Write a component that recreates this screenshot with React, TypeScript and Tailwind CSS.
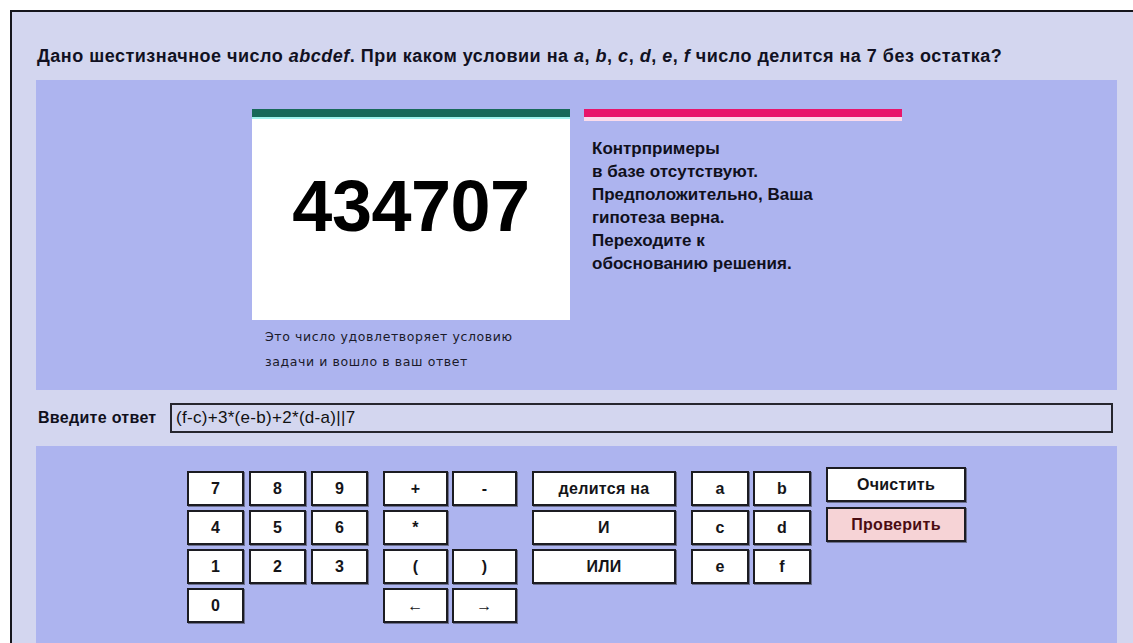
import type { ReactNode } from 'react';

// Тренажёр: проверка гипотезы о делимости шестизначного числа на 7.

const font = { fontFamily: '"Liberation Sans", Arial, sans-serif' };

const Key = ({ children, w = 'w-[57px]', pink = false }: { children: ReactNode; w?: string; pink?: boolean }) => (
  <button
    className={`${w} h-[35px] flex items-center justify-center border-2 border-[#1c1c22] text-[16px] font-bold leading-none tracking-[0.3px] shadow-[1px_1px_0_#6b6f8f] ${
      pink ? 'bg-[#f6d3d6] text-[#4a0c12]' : 'bg-white text-[#141418]'
    }`}
  >
    {children}
  </button>
);

const Spacer = ({ w }: { w: string }) => <div className={`${w} h-[35px]`} />;

export default function App() {
  return (
    <div className="w-[1133px] h-[643px] overflow-hidden bg-white pl-[10px] pt-[10px]" style={font}>
      <div className="h-full border-l-2 border-t-2 border-[#16161c] bg-[#d3d6ef]">
        <h1 className="ml-[25px] mt-[34px] text-[18px] font-bold leading-[20px] tracking-[0.5px] text-[#111122]">
          Дано шестизначное число <i>abcdef</i>. При каком условии на <i>a</i>, <i>b</i>, <i>c</i>, <i>d</i>,{' '}
          <i>e</i>, <i>f</i> число делится на 7 без остатка?
        </h1>

        <section className="ml-[24px] mt-[14px] flex h-[310px] w-[1081px] gap-[14px] bg-[#adb4ef] pl-[216px] pt-[29px]">
          <div className="w-[318px]">
            <div className="h-[8px] bg-[#17695a]" />
            <div className="h-[2px] bg-[#9ff3ee]" />
            <div className="flex h-[201px] items-center justify-center bg-white pb-[28px]">
              <span className="text-[72px] font-bold leading-none tracking-[-0.5px] text-black">434707</span>
            </div>
            <div className="pl-[13px] pt-[4px] text-[12.5px] leading-[25px] tracking-[0.6px] text-[#1a1a2a]" style={{ fontFamily: '"DejaVu Sans", sans-serif' }}>
              <div>Это число удовлетворяет условию</div>
              <div>задачи и вошло в ваш ответ</div>
            </div>
          </div>
          <div className="w-[318px]">
            <div className="h-[8px] bg-[#e8156b]" />
            <div className="h-[4px] bg-[#fbdcec]" />
            <div className="mt-[16px] pl-[8px] text-[17px] font-bold leading-[23px] text-[#10101c]">
              <div>Контрпримеры</div>
              <div>в базе отсутствуют.</div>
              <div>Предположительно, Ваша</div>
              <div>гипотеза верна.</div>
              <div>Переходите к</div>
              <div>обоснованию решения.</div>
            </div>
          </div>
        </section>

        <div className="ml-[26px] mr-[20px] flex h-[56px] items-center">
          <span className="w-[132px] text-[16px] font-bold tracking-[0.3px] text-[#10101c]">Введите ответ</span>
          <div className="flex h-[30px] flex-1 items-center border-2 border-[#26262e] px-[4px] text-[17px] tracking-[0.3px] text-[#111]">
            (f-c)+3*(e-b)+2*(d-a)||7
          </div>
        </div>

        <section className="ml-[24px] flex h-[200px] w-[1081px] items-start gap-[15px] bg-[#adb4ef] pl-[151px] pt-[25px]">
          <div className="grid grid-cols-3 gap-x-[5px] gap-y-[4px]">
            {['7', '8', '9', '4', '5', '6', '1', '2', '3', '0'].map(k => (
              <Key key={k}>{k}</Key>
            ))}
          </div>
          <div className="grid grid-cols-2 gap-x-[4px] gap-y-[4px]">
            <Key w="w-[65px]">+</Key>
            <Key w="w-[65px]">-</Key>
            <Key w="w-[65px]">*</Key>
            <Spacer w="w-[65px]" />
            <Key w="w-[65px]">(</Key>
            <Key w="w-[65px]">)</Key>
            <Key w="w-[65px]">←</Key>
            <Key w="w-[65px]">→</Key>
          </div>
          <div className="flex flex-col gap-[4px]">
            <Key w="w-[144px]">делится на</Key>
            <Key w="w-[144px]">И</Key>
            <Key w="w-[144px]">ИЛИ</Key>
          </div>
          <div className="grid grid-cols-2 gap-x-[4px] gap-y-[4px]">
            {['a', 'b', 'c', 'd', 'e', 'f'].map(k => (
              <Key key={k} w="w-[58px]">{k}</Key>
            ))}
          </div>
          <div className="-mt-[4px] flex flex-col gap-[5px]">
            <Key w="w-[140px]">Очистить</Key>
            <Key w="w-[140px]" pink>Проверить</Key>
          </div>
        </section>
      </div>
    </div>
  );
}
